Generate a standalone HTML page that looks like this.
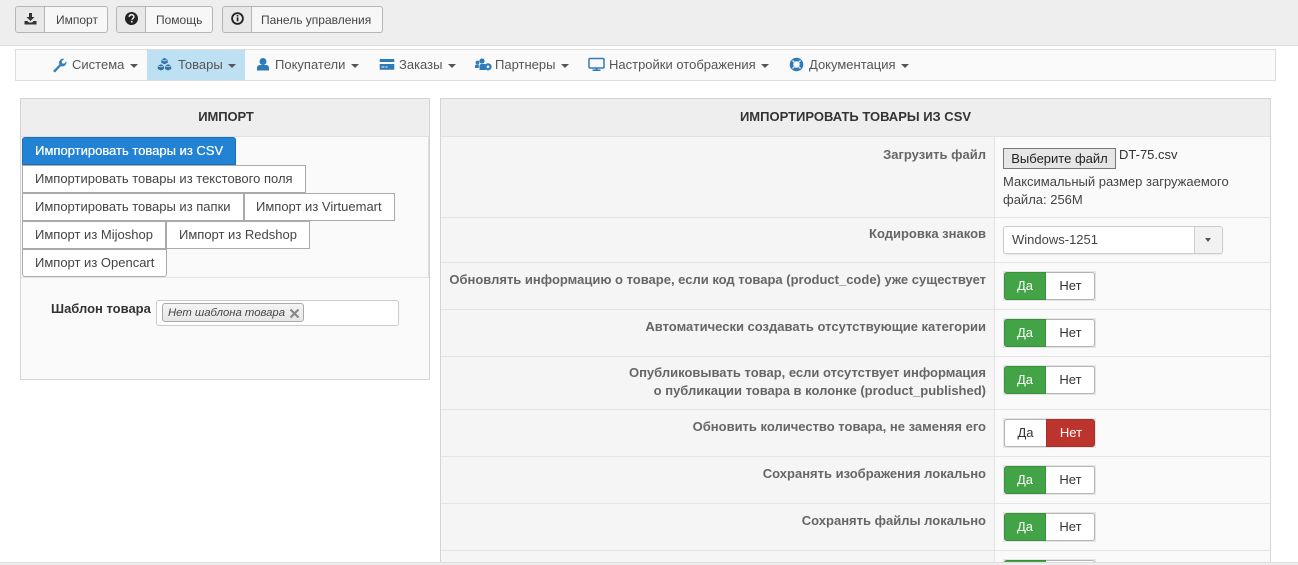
<!DOCTYPE html>
<html lang="ru">
<head>
<meta charset="utf-8">
<title>Импорт</title>
<style>
html,body{margin:0;padding:0;width:1298px;height:565px;overflow:hidden;}
body{background:#fff;font-family:"Liberation Sans",Arial,sans-serif;font-size:12px;color:#333;}
#p{position:relative;width:1298px;height:565px;overflow:hidden;background:#fff;}
.a{position:absolute;box-sizing:border-box;}
.t{position:absolute;white-space:nowrap;line-height:16px;}
.tb{position:absolute;top:6px;height:27px;box-sizing:border-box;border:1px solid #b5b5b5;border-radius:3px;background:#f7f7f7;}
.tb i{position:absolute;left:0;top:0;bottom:0;width:28px;background:#e8e8e8;border-right:1px solid #b5b5b5;border-radius:2px 0 0 2px;}
.tb svg{position:absolute;left:7px;top:4px;}
.tb span{position:absolute;top:5px;line-height:16px;white-space:nowrap;color:#444;font-size:12px;}
.nl{position:absolute;top:57px;line-height:16px;font-size:13px;color:#555;white-space:nowrap;}
.car{position:absolute;top:64px;width:0;height:0;border-left:4px solid transparent;border-right:4px solid transparent;border-top:4px solid #555;}
.ni{position:absolute;}
.tab{position:absolute;box-sizing:border-box;height:28px;background:#fff;border:1px solid #aaa;line-height:25px;font-size:13px;color:#444;padding-left:12px;white-space:nowrap;}
.row{position:absolute;left:441px;width:829px;border-bottom:1px solid #e4e4e4;}
.lb{position:absolute;left:0;width:553px;top:0;bottom:0;background:#f5f5f5;border-right:1px solid #e4e4e4;box-sizing:content-box;}
.rb{position:absolute;left:554px;right:0;top:0;bottom:0;background:#fafafa;}
.l{position:absolute;right:284px;top:8px;font-weight:bold;font-size:13px;line-height:18px;color:#666;text-align:right;white-space:nowrap;}
.sw{position:absolute;left:562px;width:93px;height:30px;box-sizing:border-box;background:#e4e4e4;}
.sw b{position:absolute;top:1px;height:28px;box-sizing:border-box;font-weight:normal;font-size:13px;line-height:26px;text-align:center;}
.sw .y{left:1px;width:42px;}
.sw .n{left:43px;width:49px;padding-left:1px;}
.on-g{background:#43a447;color:#fff;border:1px solid #3a8f3e;border-radius:3px 0 0 3px;}
.on-r{background:#bc342e;color:#fff;border:1px solid #a82e29;border-radius:0 3px 3px 0;}
.off-n{background:#fff;color:#333;border:1px solid #b5b5b5;border-left:0;border-radius:0 3px 3px 0;}
.off-y{background:#fff;color:#333;border:1px solid #b5b5b5;border-right:0;border-radius:3px 0 0 3px;}
</style>
</head>
<body>
<div id="p">
<!-- top bar -->
<div class="a" style="left:0;top:0;width:1298px;height:46px;background:#eee;border-bottom:1px solid #ddd;"></div>

<div class="tb" style="left:15px;width:93px;"><i></i>
<svg width="15" height="15" viewBox="0 0 15 15"><path d="M6 2h3v4h2.500L7.500 10 3.500 6H6z" fill="#333"/><path d="M1.500 10h3l1.500 1.500h3L10.500 10h3v3.500h-12z" fill="#333"/></svg>
<span style="left:40px;">Импорт</span></div>

<div class="tb" style="left:116px;width:97px;"><i></i>
<svg width="15" height="15" viewBox="0 0 15 15"><circle cx="7.500" cy="7.500" r="6.500" fill="#222"/><path d="M5.200 5.900c.2-1.500 1.200-2.200 2.400-2.200 1.400 0 2.300.9 2.300 2 0 1.700-1.800 1.600-1.800 3" fill="none" stroke="#e8e8e8" stroke-width="1.600"/><rect x="6.900" y="9.800" width="1.700" height="1.700" fill="#e8e8e8"/></svg>
<span style="left:39px;">Помощь</span></div>

<div class="tb" style="left:222px;width:161px;"><i></i>
<svg width="15" height="15" viewBox="0 0 15 15"><circle cx="7.500" cy="7.500" r="5.400" fill="none" stroke="#222" stroke-width="1.800"/><rect x="6.700" y="6.300" width="1.700" height="4" fill="#222"/><rect x="6.700" y="4" width="1.700" height="1.500" fill="#222"/></svg>
<span style="left:38px;">Панель управления</span></div>

<!-- nav -->
<div class="a" style="left:15px;top:49px;width:1261px;height:32px;background:#fafafa;border:1px solid #ddd;"></div>
<div class="a" style="left:147px;top:50px;width:98px;height:30px;background:#bee0f3;"></div>

<svg class="ni" style="left:52px;top:57px" width="15" height="16" viewBox="0 0 15 16"><path d="M1 14l6.300-6.500c-.6-2 0-3.800 1.200-4.900 1.100-.9 2.500-1.300 3.800-.8L9.800 4.300l.3 2 2 .4 2.300-2.300c.3 1.400 0 2.800-1.100 3.800-1.200 1.200-2.800 1.500-4.500 1L3 15.500z" fill="#3a80b8"/></svg>
<div class="nl" style="left:72px;">Система</div><div class="car" style="left:130px;"></div>

<svg class="ni" style="left:157px;top:57px" width="15" height="15" viewBox="0 0 15 15"><path d="M7.500 1l3.200 1.500v3.300L7.500 7.300 4.300 5.800V2.500z" fill="#2f6fa6"/><path d="M4 7.300l3 1.400v3.300l-3 1.500-3.200-1.500V8.700z" fill="#2f6fa6"/><path d="M11 7.300l3.200 1.400v3.300L11 13.500 8 12V8.700z" fill="#2f6fa6"/><path d="M4.300 2.500l3.200 1.500 3.200-1.500M.8 8.700L4 10l3-1.300M8 8.700L11 10l3.200-1.300" fill="none" stroke="#bee0f3" stroke-width=".8"/></svg>
<div class="nl" style="left:178px;">Товары</div><div class="car" style="left:228px;"></div>

<svg class="ni" style="left:256px;top:57px" width="14" height="15" viewBox="0 0 14 15"><circle cx="7" cy="4.500" r="3.500" fill="#2f7bb8"/><path d="M1 13.500V11c0-2 1.300-3 3-3h6c1.700 0 3 1 3 3v2.500z" fill="#2f7bb8"/></svg>
<div class="nl" style="left:275px;">Покупатели</div><div class="car" style="left:351px;"></div>

<svg class="ni" style="left:379px;top:58px" width="16" height="13" viewBox="0 0 16 13"><path d="M1.500 1h13c.5 0 .8.300.8.800V4H.7V1.800c0-.5.300-.8.800-.8zM.7 6h14.600v5c0 .5-.3.800-.8.800h-13c-.5 0-.8-.3-.8-.8zM2.500 8.500v1h3v-1zm4 0v1h2v-1z" fill="#2f7bb8" fill-rule="evenodd"/></svg>
<div class="nl" style="left:399px;">Заказы</div><div class="car" style="left:448px;"></div>

<svg class="ni" style="left:475px;top:58px" width="17" height="13" viewBox="0 0 17 13"><circle cx="2.500" cy="4.500" r="1.900" fill="#2f7bb8"/><circle cx="7" cy="3" r="2.600" fill="#2f7bb8"/><path d="M0 10V8.200c0-1 .7-1.700 1.800-1.700h2V10zM4.500 12V8c0-1 .8-2 2-2h3c.7 0 1 .2 1 .5V12z" fill="#2f7bb8"/><circle cx="13" cy="8.800" r="2.500" fill="#fafafa" stroke="#2f7bb8" stroke-width="2.200"/></svg>
<div class="nl" style="left:495px;">Партнеры</div><div class="car" style="left:561px;"></div>

<svg class="ni" style="left:588px;top:57px" width="17" height="15" viewBox="0 0 17 15"><rect x="1" y="1.500" width="15" height="9.500" rx="1" fill="none" stroke="#2f7bb8" stroke-width="1.500"/><rect x="4.500" y="12.500" width="8" height="1.500" fill="#2f7bb8"/><rect x="7.500" y="11" width="2" height="2" fill="#2f7bb8"/></svg>
<div class="nl" style="left:609px;">Настройки отображения</div><div class="car" style="left:761px;"></div>

<svg class="ni" style="left:789px;top:57px" width="15" height="15" viewBox="0 0 15 15"><circle cx="7.500" cy="7.500" r="5" fill="none" stroke="#2f7bb8" stroke-width="3.600"/><path d="M3.500 3.500l2.500 2.500M11.500 3.500L9 6M3.500 11.500L6 9M11.500 11.500L9 9" stroke="#dceaf4" stroke-width="1.300"/></svg>
<div class="nl" style="left:809px;">Документация</div><div class="car" style="left:901px;"></div>

<!-- left panel -->
<div class="a" style="left:20px;top:98px;width:410px;height:282px;background:#fafafa;border:1px solid #d4d4d4;"></div>
<div class="a" style="left:21px;top:99px;width:408px;height:38px;background:#eee;border-bottom:1px solid #e0e0e8;"></div>
<div class="t" style="left:22px;width:408px;top:109px;text-align:center;font-weight:bold;font-size:13px;letter-spacing:-.1px;color:#333;">ИМПОРТ</div>
<div class="a" style="left:21px;top:277px;width:408px;height:1px;background:#e4e4e8;"></div>
<div class="a" style="left:428px;top:137px;width:1px;height:141px;background:#dcdce0;"></div>

<div class="tab" style="left:22px;top:137px;width:214px;background:#2282d4;border-color:#1b70b8;color:#fff;border-radius:3px 3px 0 0;text-shadow:.3px 0 0 #fff;">Импортировать товары из CSV</div>
<div class="tab" style="left:22px;top:165px;width:284px;">Импортировать товары из текстового поля</div>
<div class="tab" style="left:22px;top:193px;width:222px;">Импортировать товары из папки</div>
<div class="tab" style="left:244px;top:193px;width:151px;padding-left:11px;">Импорт из Virtuemart</div>
<div class="tab" style="left:22px;top:221px;width:144px;">Импорт из Mijoshop</div>
<div class="tab" style="left:166px;top:221px;width:144px;">Импорт из Redshop</div>
<div class="tab" style="left:22px;top:249px;width:145px;border-radius:0 0 3px 3px;">Импорт из Opencart</div>

<div class="t" style="left:51px;top:301px;font-weight:bold;font-size:13px;color:#333;">Шаблон товара</div>
<div class="a" style="left:156px;top:300px;width:243px;height:26px;background:#fff;border:1px solid #ccc;border-radius:3px;"></div>
<div class="a" style="left:162px;top:303px;width:142px;height:19px;background:linear-gradient(#f4f4f4,#e6e6e6);border:1px solid #aaa;border-radius:3px;"></div>
<div class="t" style="left:168px;top:305px;font-style:italic;font-size:11.300px;color:#444;">Нет шаблона товара</div>
<svg class="ni" style="left:289px;top:308px" width="11" height="11" viewBox="0 0 11 11"><path d="M1.500 1.500l8 8M9.500 1.500l-8 8" stroke="#888" stroke-width="2.200"/></svg>

<!-- right panel -->
<div class="a" style="left:440px;top:98px;width:831px;height:467px;background:#fafafa;border:1px solid #d4d4d4;border-bottom:0;"></div>
<div class="a" style="left:441px;top:99px;width:829px;height:38px;background:#eee;border-bottom:1px solid #e0e0e0;"></div>
<div class="t" style="left:441px;width:829px;top:109px;text-align:center;font-weight:bold;font-size:13px;color:#333;">ИМПОРТИРОВАТЬ ТОВАРЫ ИЗ CSV</div>

<div class="row" style="top:137px;height:80px;"><div class="lb"></div><div class="rb"></div>
<div class="l" style="top:9px;">Загрузить файл</div>
<div class="a" style="left:562px;top:11px;width:113px;height:21px;background:#e6e6e6;border:1px solid #777;text-align:center;font-size:13px;line-height:19px;color:#222;">Выберите файл</div>
<div class="t" style="left:678px;top:10px;font-size:13px;color:#333;">DT-75.csv</div>
<div class="t" style="left:562px;top:36px;font-size:13px;line-height:18px;color:#444;white-space:normal;width:260px;">Максимальный размер загружаемого<br>файла: 256M</div>
</div>

<div class="row" style="top:218px;height:44px;"><div class="lb"></div><div class="rb"></div>
<div class="l" style="top:7px;">Кодировка знаков</div>
<div class="a" style="left:562px;top:8px;width:220px;height:28px;background:#fff;border:1px solid #ccc;border-radius:3px;box-shadow:0 1px 1px #e8e8e8;"></div>
<div class="a" style="left:753px;top:9px;width:28px;height:26px;background:#f2f2f2;border-left:1px solid #ccc;border-radius:0 2px 2px 0;"></div>
<div class="a" style="left:764px;top:20px;width:0;height:0;border-left:3.500px solid transparent;border-right:3.500px solid transparent;border-top:4px solid #555;"></div>
<div class="t" style="left:571px;top:14px;font-size:13px;color:#444;">Windows-1251</div>
</div>

<div class="row" style="top:263px;height:46px;"><div class="lb"></div><div class="rb"></div>
<div class="l">Обновлять информацию о товаре, если код товара (product_code) уже существует</div>
<div class="sw" style="top:8px;"><b class="y on-g">Да</b><b class="n off-n">Нет</b></div>
</div>

<div class="row" style="top:310px;height:46px;"><div class="lb"></div><div class="rb"></div>
<div class="l">Автоматически создавать отсутствующие категории</div>
<div class="sw" style="top:8px;"><b class="y on-g">Да</b><b class="n off-n">Нет</b></div>
</div>

<div class="row" style="top:357px;height:52px;"><div class="lb"></div><div class="rb"></div>
<div class="l" style="top:7px;">Опубликовывать товар, если отсутствует информация<br>о публикации товара в колонке (product_published)</div>
<div class="sw" style="top:8px;"><b class="y on-g">Да</b><b class="n off-n">Нет</b></div>
</div>

<div class="row" style="top:410px;height:46px;"><div class="lb"></div><div class="rb"></div>
<div class="l">Обновить количество товара, не заменяя его</div>
<div class="sw" style="top:8px;"><b class="y off-y">Да</b><b class="n on-r">Нет</b></div>
</div>

<div class="row" style="top:457px;height:46px;"><div class="lb"></div><div class="rb"></div>
<div class="l">Сохранять изображения локально</div>
<div class="sw" style="top:8px;"><b class="y on-g">Да</b><b class="n off-n">Нет</b></div>
</div>

<div class="row" style="top:504px;height:46px;"><div class="lb"></div><div class="rb"></div>
<div class="l">Сохранять файлы локально</div>
<div class="sw" style="top:8px;"><b class="y on-g">Да</b><b class="n off-n">Нет</b></div>
</div>

<div class="row" style="top:551px;height:14px;border:0;overflow:hidden;"><div class="lb"></div><div class="rb"></div>
<div class="sw" style="top:8px;"><b class="y on-g">&nbsp;</b><b class="n off-n">&nbsp;</b></div>
</div>

<!-- bottom bar -->
<div class="a" style="left:0;top:562px;width:1298px;height:3px;background:#eee;border-top:1px solid #ddd;"></div>
</div>
</body>
</html>
